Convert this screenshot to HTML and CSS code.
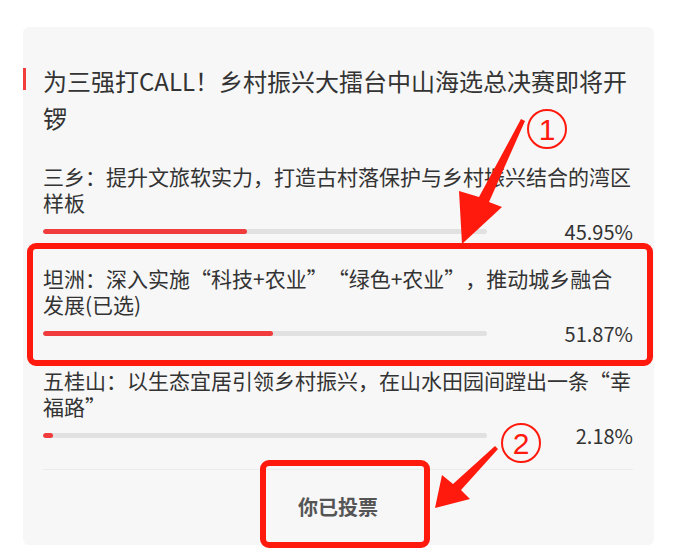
FILE: index.html
```html
<!DOCTYPE html>
<html lang="zh-CN">

<head>
    <meta charset="UTF-8">
    <meta name="viewport" content="width=device-width, initial-scale=1.0">
    <title>投票 - 乡村振兴大擂台</title>
    <link rel="stylesheet" href="styles.css">
</head>

<body>
    <div class="vote-card">
        <h2 class="vote-title">为三强打CALL！乡村振兴大擂台中山海选总决赛即将开锣</h2>

        <ul class="vote-list">
            <li class="vote-item">
                <div class="vote-text">三乡：提升文旅软实力，打造古村落保护与乡村振兴结合的湾区样板</div>
                <div class="vote-result">
                    <div class="vote-bar"><span class="vote-fill" style="width: 45.95%"></span></div>
                    <span class="vote-percent">45.95%</span>
                </div>
            </li>
            <li class="vote-item selected">
                <div class="vote-text">坦洲：深入实施“科技+农业”“绿色+农业”，推动城乡融合发展(已选)</div>
                <div class="vote-result">
                    <div class="vote-bar"><span class="vote-fill" style="width: 51.87%"></span></div>
                    <span class="vote-percent">51.87%</span>
                </div>
            </li>
            <li class="vote-item">
                <div class="vote-text">五桂山：以生态宜居引领乡村振兴，在山水田园间蹚出一条“幸福路”</div>
                <div class="vote-result">
                    <div class="vote-bar"><span class="vote-fill" style="width: 2.18%"></span></div>
                    <span class="vote-percent">2.18%</span>
                </div>
            </li>
        </ul>

        <div class="vote-footer">
            <button class="vote-btn" disabled>你已投票</button>
        </div>
    </div>

    <!-- 标注层 -->
    <svg class="marks" width="680" height="559" viewBox="0 0 680 559">
        <rect x="30" y="246" width="620" height="117" rx="6" fill="none" stroke="#ff1a0d" stroke-width="6" />
        <rect x="263" y="463" width="164" height="82" rx="6" fill="none" stroke="#ff1a0d" stroke-width="6" />

        <circle cx="547" cy="129" r="19" fill="none" stroke="#ff1a0d" stroke-width="2" />
        <text x="547" y="140" class="mark-num">1</text>
        <polygon points="521,119 479,197 459,191 462,244 502,207 489,202 525,121" fill="#ff1a0d" />

        <circle cx="521" cy="443" r="19" fill="none" stroke="#ff1a0d" stroke-width="2" />
        <text x="521" y="454" class="mark-num">2</text>
        <polygon points="495,446 453,484 442,475 435,508 470,499 461,490 498,449" fill="#ff1a0d" />
    </svg>
</body>

</html>
```

FILE: styles.css
```css
* {
    margin: 0;
    padding: 0;
    box-sizing: border-box;
    font-family: 'Noto Sans CJK SC', 'Noto Sans', sans-serif;
}

body {
    background-color: #fff;
    color: #333;
    position: relative;
    width: 680px;
    height: 559px;
    overflow: hidden;
}

.vote-card {
    width: 631px;
    margin: 27px 0 0 23px;
    padding: 35px 21px 0 20px;
    background-color: #f7f7f7;
    border-radius: 6px;
}

.vote-title {
    position: relative;
    font-size: 24px;
    font-weight: normal;
    line-height: 37px;
    color: #333;
}

.vote-title::before {
    content: "";
    position: absolute;
    left: -20px;
    top: 6px;
    width: 3px;
    height: 22px;
    background-color: #f23d3d;
}

.vote-list {
    list-style: none;
    margin-top: 27px;
    padding-bottom: 21px;
    border-bottom: 1px solid #ebebeb;
}

.vote-item + .vote-item {
    margin-top: 21px;
}

.vote-text {
    font-size: 21px;
    line-height: 26px;
    color: #333;
    text-spacing-trim: space-all;
}

.vote-result {
    display: flex;
    align-items: center;
    margin-top: 3px;
    height: 26px;
}

.vote-bar {
    width: 444px;
    height: 5px;
    border-radius: 3px;
    background-color: #e1e1e1;
    overflow: hidden;
}

.vote-fill {
    display: block;
    height: 100%;
    border-radius: 3px;
    background-color: #f03c3c;
}

.vote-percent {
    margin-left: auto;
    font-size: 20px;
    color: #333;
}

.vote-footer {
    height: 75px;
    display: flex;
    justify-content: center;
    align-items: center;
    padding-bottom: 3px;
}

.vote-btn {
    border: none;
    background: none;
    font-size: 20px;
    font-weight: bold;
    color: #555;
    cursor: default;
}

.marks {
    position: absolute;
    left: 0;
    top: 0;
    pointer-events: none;
}

.mark-num {
    fill: #ff1a0d;
    font-size: 30px;
    text-anchor: middle;
    font-family: 'Liberation Sans', sans-serif;
}
```
